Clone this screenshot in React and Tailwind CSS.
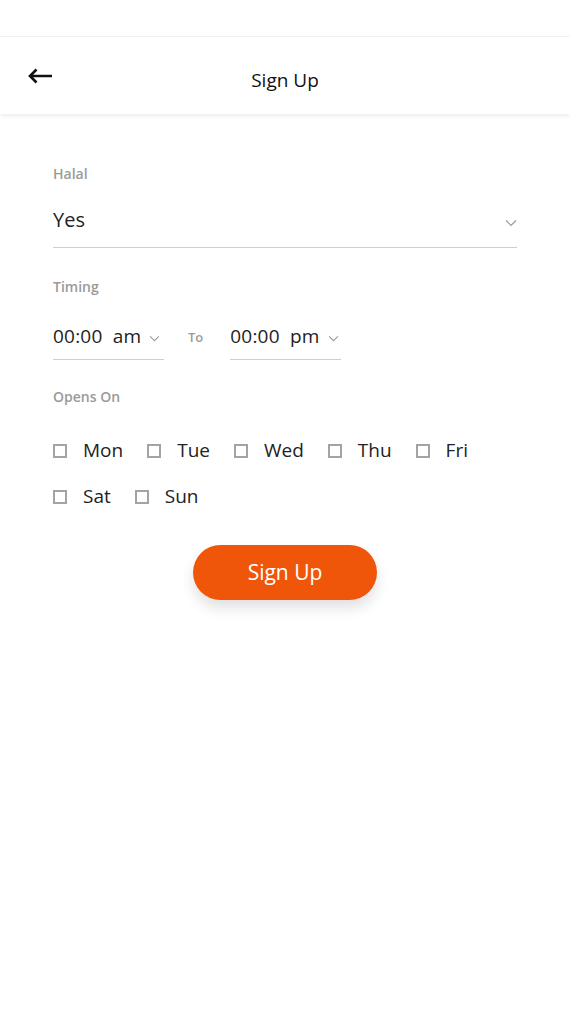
import React from 'react';

const font = { fontFamily: '"Open Sans", "Noto Sans", sans-serif' };

const Chevron = ({ className }) => (
  <svg viewBox="0 0 12 8" className={className} fill="none" stroke="currentColor" strokeWidth="1.2">
    <path d="M1 1.5l5 5 5-5" />
  </svg>
);

const Label = ({ children }) => (
  <div className="text-[14px] font-semibold text-[#9a9a9a] leading-none">{children}</div>
);

const TimeSelect = ({ value }) => (
  <div className="w-[111px] border-b border-[#cfcfcf] pb-[13px] flex items-center">
    <span className="text-[19px] text-[#222] leading-none tracking-[0.2px] whitespace-pre">{value}</span>
    <Chevron className="w-[11px] h-[7px] ml-[8px] mt-[3px] text-[#9a9a9a]" />
  </div>
);

const Day = ({ name }) => (
  <label className="flex items-center gap-[16px]">
    <span className="w-[14px] h-[14px] border-2 border-[#a3a3a3] bg-white" />
    <span className="text-[19px] text-[#222] leading-none">{name}</span>
  </label>
);

export default function App() {
  const days = ['Mon', 'Tue', 'Wed', 'Thu', 'Fri', 'Sat', 'Sun'];

  return (
    <div className="min-h-[1016px] bg-white" style={font}>
      {/* status bar */}
      <div className="h-[37px] border-b border-[#f3f3f3]" />

      {/* header */}
      <div className="h-[77px] flex items-center px-[27px] relative shadow-[0_2px_4px_rgba(0,0,0,0.08)]">
        <svg viewBox="0 0 26 16" className="w-[26px] h-[16px]" fill="none" stroke="#111" strokeWidth="2.6">
          <path d="M25 8H3M9.5 1.5L3 8l6.5 6.5" />
        </svg>
        <div className="absolute inset-x-0 top-0 h-full flex items-center justify-center pointer-events-none">
          <span className="text-[19px] text-[#111] mt-[10px]">Sign Up</span>
        </div>
      </div>

      {/* form */}
      <div className="px-[53px] pt-[53px]">
        <Label>Halal</Label>
        <div className="mt-[29px] border-b border-[#cfcfcf] pb-[17px] flex items-center justify-between">
          <span className="text-[20px] text-[#222] leading-none">Yes</span>
          <Chevron className="w-[12px] h-[8px] mt-[6px] text-[#9a9a9a]" />
        </div>

        <div className="mt-[32px]">
          <Label>Timing</Label>
        </div>
        <div className="mt-[33px] flex items-center">
          <TimeSelect value="00:00  am" />
          <span className="ml-[24px] mr-[27px] -mt-[12px] text-[13px] font-semibold text-[#9a9a9a]">To</span>
          <TimeSelect value="00:00  pm" />
        </div>

        <div className="mt-[30px]">
          <Label>Opens On</Label>
        </div>
        <div className="mt-[37px] flex flex-wrap gap-x-[24px] gap-y-[27px]">
          {days.map((d) => (
            <Day key={d} name={d} />
          ))}
        </div>

        <div className="mt-[39px] flex justify-center">
          <button className="w-[184px] h-[55px] rounded-full bg-[#ef560a] text-white text-[21px] shadow-[0_8px_14px_rgba(0,0,0,0.12)]">
            Sign Up
          </button>
        </div>
      </div>
    </div>
  );
}
